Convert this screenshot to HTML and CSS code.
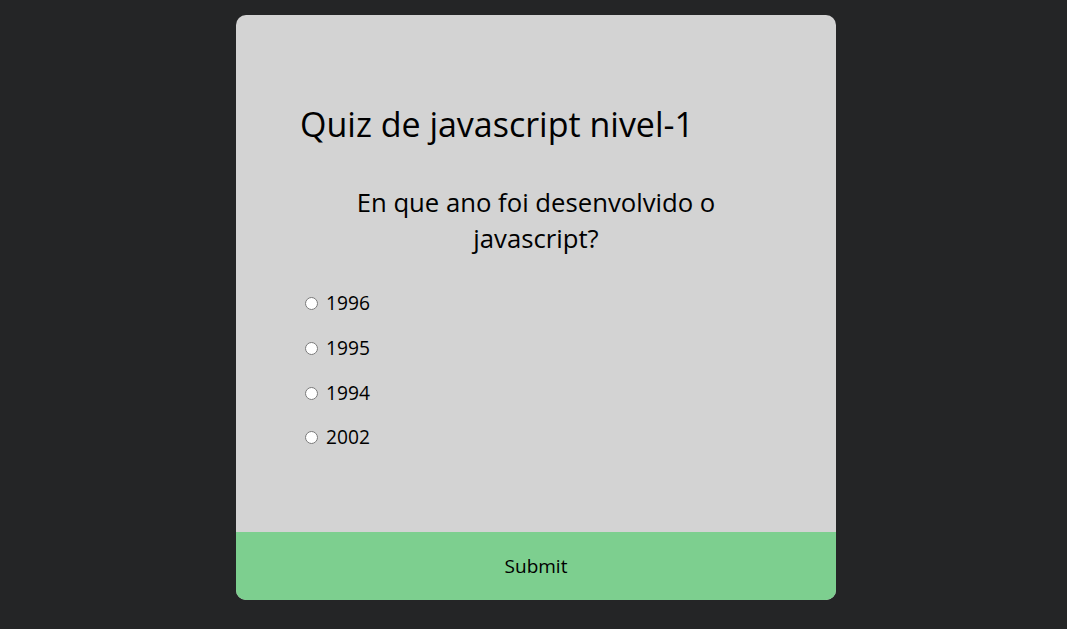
FILE: index.html
```html
<!DOCTYPE html>
<html lang="pt">
<head>
<meta charset="utf-8">
<title>Quiz</title>
<link rel="stylesheet" href="styles.css">
</head>
<body>
<div class="quiz-container">
  <div class="quiz-header">
    <h1 class="quiz-title">Quiz de javascript nivel-1</h1>
    <h2 class="question">En que ano foi desenvolvido o javascript?</h2>
    <ul class="answers">
      <li><input type="radio" name="answer" id="a" class="answer"> <label for="a">1996</label></li>
      <li><input type="radio" name="answer" id="b" class="answer"> <label for="b">1995</label></li>
      <li><input type="radio" name="answer" id="c" class="answer"> <label for="c">1994</label></li>
      <li><input type="radio" name="answer" id="d" class="answer"> <label for="d">2002</label></li>
    </ul>
  </div>
  <button class="submit">Submit</button>
</div>
</body>
</html>
```

FILE: styles.css
```css
* { box-sizing: border-box; }
html, body { margin: 0; }
body {
  background: #242526;
  font-family: "Open Sans", "DejaVu Sans", sans-serif;
  display: flex;
  justify-content: center;
  padding: 15px 0 0 5px;
  min-height: 100vh;
}
.quiz-container {
  background: #d3d3d3;
  border-radius: 10px;
  width: 600px;
  overflow: hidden;
  align-self: flex-start;
}
.quiz-header {
  padding: 64px 64px 64px;
}
.quiz-title {
  font-size: 34px;
  font-weight: 500;
  line-height: 48px;
  margin: 21px 0;
  color: #000;
}
.question {
  font-size: 25.7px;
  font-weight: 500;
  line-height: 36px;
  padding: 16px;
  margin: 0;
  text-align: center;
  color: #000;
}
.answers {
  list-style: none;
  padding: 0;
  margin: 16px 0 0;
}
.answers li {
  font-size: 19.2px;
  line-height: 28.8px;
  margin: 16px 0;
  color: #000;
}
.answer {
  margin: 3px 3px 0 5px;
}
.submit {
  display: block;
  width: 100%;
  border: none;
  background: #7dcf8f;
  color: #000;
  font-family: inherit;
  font-size: 19px;
  line-height: 26.4px;
  padding: 20.8px;
  cursor: pointer;
}
```
